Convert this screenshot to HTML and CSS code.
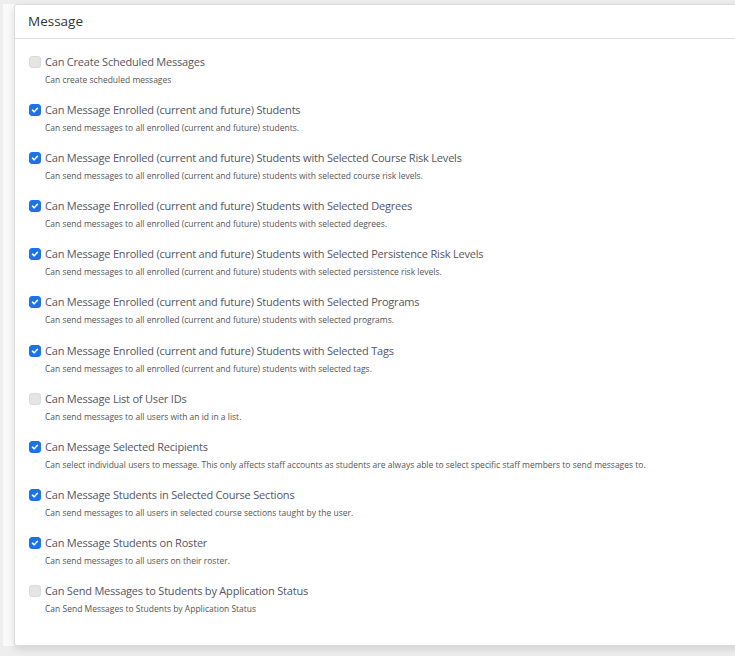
FILE: index.html
```html
<!DOCTYPE html>
<html>
<head>
<meta charset="utf-8">
<link rel="stylesheet" href="styles.css">
</head>
<body>
<div class="page">
  <div class="gutter">
    <section class="card">
      <header class="card-head">Message</header>
      <div class="card-body">
        <div class="perm">
          <span class="box"></span>
          <div class="text">
            <div class="label">Can Create Scheduled Messages</div>
            <div class="desc">Can create scheduled messages</div>
          </div>
        </div>
        <div class="perm">
          <span class="box on"><svg viewBox="0 0 12 12"><path d="M3 6.2 L5.1 8.2 L9 4"/></svg></span>
          <div class="text">
            <div class="label">Can Message Enrolled (current and future) Students</div>
            <div class="desc">Can send messages to all enrolled (current and future) students.</div>
          </div>
        </div>
        <div class="perm">
          <span class="box on"><svg viewBox="0 0 12 12"><path d="M3 6.2 L5.1 8.2 L9 4"/></svg></span>
          <div class="text">
            <div class="label">Can Message Enrolled (current and future) Students with Selected Course Risk Levels</div>
            <div class="desc">Can send messages to all enrolled (current and future) students with selected course risk levels.</div>
          </div>
        </div>
        <div class="perm">
          <span class="box on"><svg viewBox="0 0 12 12"><path d="M3 6.2 L5.1 8.2 L9 4"/></svg></span>
          <div class="text">
            <div class="label">Can Message Enrolled (current and future) Students with Selected Degrees</div>
            <div class="desc">Can send messages to all enrolled (current and future) students with selected degrees.</div>
          </div>
        </div>
        <div class="perm">
          <span class="box on"><svg viewBox="0 0 12 12"><path d="M3 6.2 L5.1 8.2 L9 4"/></svg></span>
          <div class="text">
            <div class="label">Can Message Enrolled (current and future) Students with Selected Persistence Risk Levels</div>
            <div class="desc">Can send messages to all enrolled (current and future) students with selected persistence risk levels.</div>
          </div>
        </div>
        <div class="perm">
          <span class="box on"><svg viewBox="0 0 12 12"><path d="M3 6.2 L5.1 8.2 L9 4"/></svg></span>
          <div class="text">
            <div class="label">Can Message Enrolled (current and future) Students with Selected Programs</div>
            <div class="desc">Can send messages to all enrolled (current and future) students with selected programs.</div>
          </div>
        </div>
        <div class="perm">
          <span class="box on"><svg viewBox="0 0 12 12"><path d="M3 6.2 L5.1 8.2 L9 4"/></svg></span>
          <div class="text">
            <div class="label">Can Message Enrolled (current and future) Students with Selected Tags</div>
            <div class="desc">Can send messages to all enrolled (current and future) students with selected tags.</div>
          </div>
        </div>
        <div class="perm">
          <span class="box"></span>
          <div class="text">
            <div class="label">Can Message List of User IDs</div>
            <div class="desc">Can send messages to all users with an id in a list.</div>
          </div>
        </div>
        <div class="perm">
          <span class="box on"><svg viewBox="0 0 12 12"><path d="M3 6.2 L5.1 8.2 L9 4"/></svg></span>
          <div class="text">
            <div class="label">Can Message Selected Recipients</div>
            <div class="desc">Can select individual users to message. This only affects staff accounts as students are always able to select specific staff members to send messages to.</div>
          </div>
        </div>
        <div class="perm">
          <span class="box on"><svg viewBox="0 0 12 12"><path d="M3 6.2 L5.1 8.2 L9 4"/></svg></span>
          <div class="text">
            <div class="label">Can Message Students in Selected Course Sections</div>
            <div class="desc">Can send messages to all users in selected course sections taught by the user.</div>
          </div>
        </div>
        <div class="perm">
          <span class="box on"><svg viewBox="0 0 12 12"><path d="M3 6.2 L5.1 8.2 L9 4"/></svg></span>
          <div class="text">
            <div class="label">Can Message Students on Roster</div>
            <div class="desc">Can send messages to all users on their roster.</div>
          </div>
        </div>
        <div class="perm">
          <span class="box"></span>
          <div class="text">
            <div class="label">Can Send Messages to Students by Application Status</div>
            <div class="desc">Can Send Messages to Students by Application Status</div>
          </div>
        </div>
      </div>
    </section>
  </div>
</div>
</body>
</html>
```
FILE: styles.css
```css
html, body {
  margin: 0;
  padding: 0;
}
body {
  background: #eeeeee;
  overflow: hidden;
  width: 735px;
  height: 656px;
  font-family: "Open Sans", "Noto Sans", sans-serif;
}
.page {
  padding: 4px 0 0 3px;
}
.gutter {
  background: #fafafa;
  padding-left: 11px;
  width: 820px;
}
.card {
  background: #fff;
  border: 1px solid #dcdcdc;
  border-radius: 3px;
  box-shadow: 0 3px 8px rgba(0,0,0,0.12);
  height: 642px;
  box-sizing: border-box;
}
.card-head {
  height: 34px;
  box-sizing: border-box;
  padding: 7px 0 0 13px;
  font-size: 13.5px;
  line-height: 19px;
  color: #333;
  border-bottom: 1px solid #dedede;
}
.card-body {
  padding: 14px 0 0 14px;
}
.perm {
  display: flex;
  align-items: flex-start;
  gap: 4px;
  height: 48.1px;
}
.box {
  flex: none;
  width: 12px;
  height: 12px;
  margin-top: 3px;
  border-radius: 3px;
  box-sizing: border-box;
  background: #e5e5e5;
  border: 1px solid #dadada;
  display: flex;
}
.box.on {
  background: #1a73e8;
  border-color: #1a73e8;
}
.box svg {
  width: 100%;
  height: 100%;
}
.box path {
  fill: none;
  stroke: #fff;
  stroke-width: 1.8;
  stroke-linecap: round;
  stroke-linejoin: round;
}
.label {
  font-size: 11px;
  line-height: 17px;
  color: #55555f;
  letter-spacing: -0.2px;
}
.desc {
  font-size: 8.5px;
  line-height: 14px;
  color: #555;
  margin-top: 3px;
}
```
